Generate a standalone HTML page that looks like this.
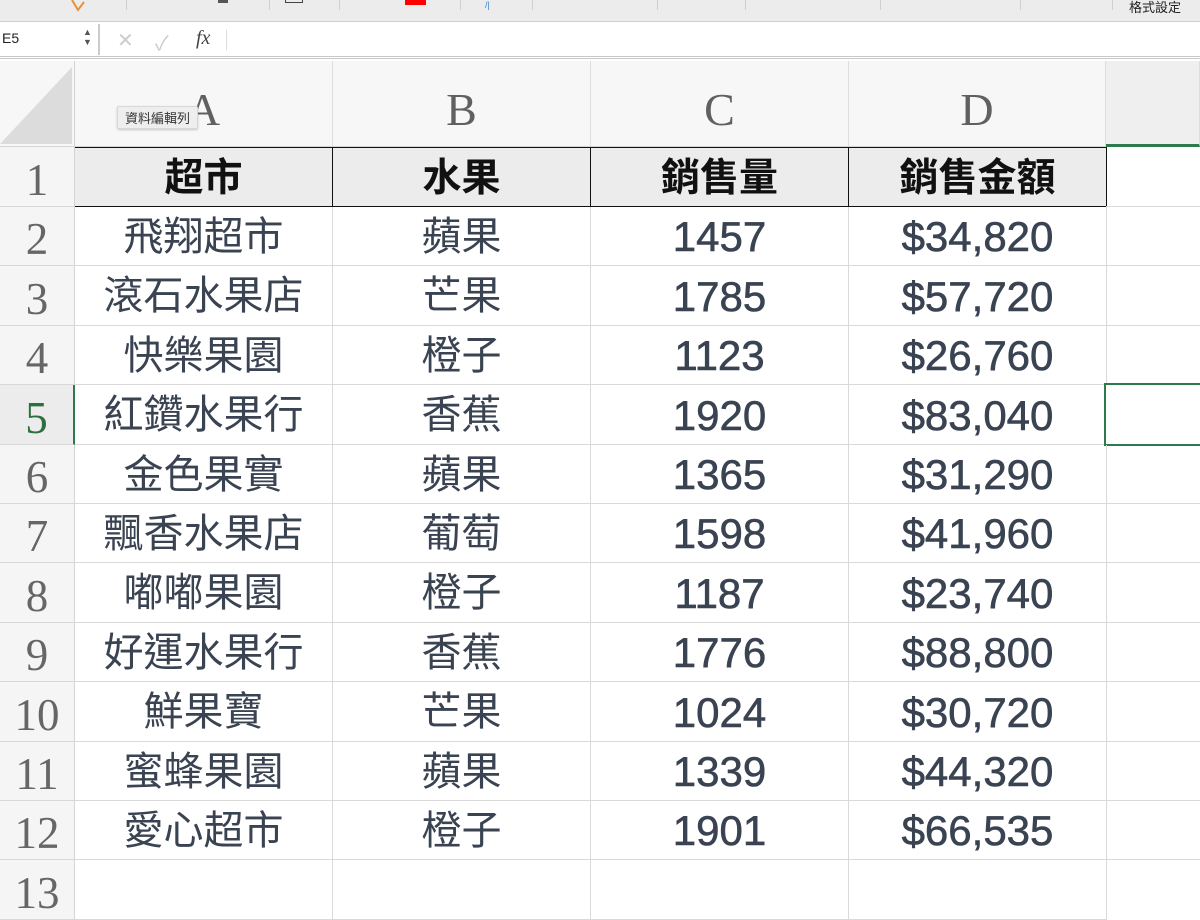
<!DOCTYPE html>
<html><head><meta charset="utf-8"><style>
*{margin:0;padding:0;box-sizing:border-box}
body{width:1200px;height:898px;overflow:hidden;background:#fff;position:relative;font-family:"Liberation Sans","Noto Sans CJK TC",sans-serif}
.a{position:absolute}
.tb{left:0;top:0;width:1200px;height:22px;background:#ececec;border-bottom:1px solid #cfcfcf}
.sep{position:absolute;top:0;width:1px;height:10px;background:#d0d0d0}
.fb{left:0;top:22px;width:1200px;height:37px;background:#fff;border-bottom:3px double #c8c8c8}
.ch{top:61px;height:86px;background:#f7f7f7;border-bottom:1px solid #d4d4d4;border-right:1px solid #dedede;font-family:"Liberation Serif",serif;font-size:46px;color:#606060;text-align:center;line-height:98px}
.rh{left:0;width:75px;background:#f5f5f5;border-bottom:1px solid #d8d8d8;border-right:1px solid #d4d4d4;font-family:"Liberation Serif",serif;font-size:45px;color:#666;text-align:center;overflow:hidden}
.c{border-bottom:1px solid #d9d9d9;border-right:1px solid #d9d9d9;text-align:center;color:#3a4352;font-size:40px;overflow:hidden;white-space:nowrap}
.c[style*="left:591px"],.c[style*="left:849px"]{font-size:42px;-webkit-text-stroke:0.6px #3a4352}
.h{background:#ececec;border:1px solid #111;border-left:none;color:#111;font-weight:bold;font-size:39px;text-align:center}
</style></head><body>
<div class="a tb">
 <svg class="a" style="left:70px;top:0" width="20" height="12"><path d="M2 0 L8 10 L14 2" fill="none" stroke="#e8913a" stroke-width="2"/></svg>
 <div class="sep" style="left:126px"></div>
 <div class="a" style="left:218px;top:0;width:10px;height:3px;background:#555"></div>
 <div class="sep" style="left:269px"></div>
 <div class="a" style="left:285px;top:0;width:18px;height:3px;border:1px solid #444;border-top:none"></div>
 <div class="sep" style="left:339px"></div>
 <div class="a" style="left:405px;top:0;width:21px;height:5px;background:#f00"></div>
 <div class="sep" style="left:460px"></div>
 <div class="a" style="left:485px;top:0;font-size:9px;color:#3a80d0">/|</div>
 <div class="sep" style="left:532px"></div>
 <div class="sep" style="left:657px"></div>
 <div class="sep" style="left:745px"></div>
 <div class="sep" style="left:880px"></div>
 <div class="sep" style="left:1020px"></div>
 <div class="sep" style="left:1112px"></div>
 <div class="a" style="left:1129px;top:-3px;font-size:13px;color:#222;font-family:'Liberation Sans','Noto Sans CJK TC',sans-serif">格式設定</div>
</div>
<div class="a fb">
 <div class="a" style="left:0;top:2px;width:100px;height:31px;border-right:2px solid #ccc;background:#fff"></div>
 <div class="a" style="left:2px;top:8px;font-size:14px;color:#222">E5</div>
 <div class="a" style="left:83px;top:5px;font-size:9px;color:#555;line-height:10px">▲<br>▼</div>
 <div class="a" style="left:117px;top:6px;font-size:20px;color:#ccc">✕</div>
 <div class="a" style="left:155px;top:5px;font-size:20px;color:#ccc">✓</div>
 <div class="a" style="left:196px;top:5px;font-size:20px;color:#444;font-family:'Liberation Serif',serif;font-style:italic">fx</div>
 <div class="a" style="left:226px;top:8px;width:1px;height:20px;background:#ddd"></div>
</div>
<div class="a" style="left:0;top:61px;width:75px;height:86px;background:#f7f7f7;border-right:1px solid #d4d4d4;border-bottom:1px solid #d4d4d4"></div>
<svg class="a" style="left:0;top:61px" width="75" height="86"><polygon points="72,6 72,83 0,83" fill="#dcdcdc"/></svg>
<div class="a ch" style="left:75px;width:258px">A</div>
<div class="a ch" style="left:333px;width:258px">B</div>
<div class="a ch" style="left:591px;width:258px">C</div>
<div class="a ch" style="left:849px;width:257px">D</div>
<div class="a ch" style="left:1106px;width:94px;background:#efefef;border-bottom:3px solid #2f7a4c"></div>
<div class="a" style="left:117px;top:106px;padding:1px 7px;background:#eee;border:1px solid #d8d8d8;border-radius:2px;font-size:13px;color:#333;box-shadow:0 1px 2px rgba(0,0,0,.2)">資料編輯列</div>

<div class="a rh" style="top:147px;height:60px;line-height:66px">1</div>
<div class="a rh" style="top:207px;height:59px;line-height:65px">2</div>
<div class="a rh" style="top:266px;height:60px;line-height:66px">3</div>
<div class="a rh" style="top:326px;height:59px;line-height:65px">4</div>
<div class="a rh" style="top:385px;height:60px;line-height:66px;color:#2c7040;background:#ececec;border-right:2px solid #2f7a4c">5</div>
<div class="a rh" style="top:445px;height:59px;line-height:65px">6</div>
<div class="a rh" style="top:504px;height:59px;line-height:65px">7</div>
<div class="a rh" style="top:563px;height:60px;line-height:66px">8</div>
<div class="a rh" style="top:623px;height:59px;line-height:65px">9</div>
<div class="a rh" style="top:682px;height:60px;line-height:66px">10</div>
<div class="a rh" style="top:742px;height:59px;line-height:65px">11</div>
<div class="a rh" style="top:801px;height:59px;line-height:65px">12</div>
<div class="a rh" style="top:860px;height:60px;line-height:66px">13</div>

<div class="a h" style="left:75px;top:147px;width:258px;height:60px;line-height:62px">超市</div>
<div class="a h" style="left:333px;top:147px;width:258px;height:60px;line-height:62px">水果</div>
<div class="a h" style="left:591px;top:147px;width:258px;height:60px;line-height:62px">銷售量</div>
<div class="a h" style="left:849px;top:147px;width:258px;height:60px;line-height:62px">銷售金額</div>
<div class="a" style="left:1106px;top:147px;width:94px;height:60px;border-bottom:1px solid #d9d9d9"></div>

<div class="a c" style="left:75px;top:207px;width:258px;height:59px;line-height:60px">飛翔超市</div>
<div class="a c" style="left:333px;top:207px;width:258px;height:59px;line-height:60px">蘋果</div>
<div class="a c" style="left:591px;top:207px;width:258px;height:59px;line-height:60px">1457</div>
<div class="a c" style="left:849px;top:207px;width:258px;height:59px;line-height:60px">$34,820</div>
<div class="a c" style="left:1107px;top:207px;width:93px;height:59px;border-right:none"></div>

<div class="a c" style="left:75px;top:266px;width:258px;height:60px;line-height:61px">滾石水果店</div>
<div class="a c" style="left:333px;top:266px;width:258px;height:60px;line-height:61px">芒果</div>
<div class="a c" style="left:591px;top:266px;width:258px;height:60px;line-height:61px">1785</div>
<div class="a c" style="left:849px;top:266px;width:258px;height:60px;line-height:61px">$57,720</div>
<div class="a c" style="left:1107px;top:266px;width:93px;height:60px;border-right:none"></div>

<div class="a c" style="left:75px;top:326px;width:258px;height:59px;line-height:60px">快樂果園</div>
<div class="a c" style="left:333px;top:326px;width:258px;height:59px;line-height:60px">橙子</div>
<div class="a c" style="left:591px;top:326px;width:258px;height:59px;line-height:60px">1123</div>
<div class="a c" style="left:849px;top:326px;width:258px;height:59px;line-height:60px">$26,760</div>
<div class="a c" style="left:1107px;top:326px;width:93px;height:59px;border-right:none"></div>

<div class="a c" style="left:75px;top:385px;width:258px;height:60px;line-height:61px">紅鑽水果行</div>
<div class="a c" style="left:333px;top:385px;width:258px;height:60px;line-height:61px">香蕉</div>
<div class="a c" style="left:591px;top:385px;width:258px;height:60px;line-height:61px">1920</div>
<div class="a c" style="left:849px;top:385px;width:258px;height:60px;line-height:61px">$83,040</div>
<div class="a" style="left:1104px;top:383px;width:100px;height:63px;border:2px solid #2f7a4c;background:#fff"></div>

<div class="a c" style="left:75px;top:445px;width:258px;height:59px;line-height:60px">金色果實</div>
<div class="a c" style="left:333px;top:445px;width:258px;height:59px;line-height:60px">蘋果</div>
<div class="a c" style="left:591px;top:445px;width:258px;height:59px;line-height:60px">1365</div>
<div class="a c" style="left:849px;top:445px;width:258px;height:59px;line-height:60px">$31,290</div>
<div class="a c" style="left:1107px;top:445px;width:93px;height:59px;border-right:none"></div>

<div class="a c" style="left:75px;top:504px;width:258px;height:59px;line-height:60px">飄香水果店</div>
<div class="a c" style="left:333px;top:504px;width:258px;height:59px;line-height:60px">葡萄</div>
<div class="a c" style="left:591px;top:504px;width:258px;height:59px;line-height:60px">1598</div>
<div class="a c" style="left:849px;top:504px;width:258px;height:59px;line-height:60px">$41,960</div>
<div class="a c" style="left:1107px;top:504px;width:93px;height:59px;border-right:none"></div>

<div class="a c" style="left:75px;top:563px;width:258px;height:60px;line-height:61px">嘟嘟果園</div>
<div class="a c" style="left:333px;top:563px;width:258px;height:60px;line-height:61px">橙子</div>
<div class="a c" style="left:591px;top:563px;width:258px;height:60px;line-height:61px">1187</div>
<div class="a c" style="left:849px;top:563px;width:258px;height:60px;line-height:61px">$23,740</div>
<div class="a c" style="left:1107px;top:563px;width:93px;height:60px;border-right:none"></div>

<div class="a c" style="left:75px;top:623px;width:258px;height:59px;line-height:60px">好運水果行</div>
<div class="a c" style="left:333px;top:623px;width:258px;height:59px;line-height:60px">香蕉</div>
<div class="a c" style="left:591px;top:623px;width:258px;height:59px;line-height:60px">1776</div>
<div class="a c" style="left:849px;top:623px;width:258px;height:59px;line-height:60px">$88,800</div>
<div class="a c" style="left:1107px;top:623px;width:93px;height:59px;border-right:none"></div>

<div class="a c" style="left:75px;top:682px;width:258px;height:60px;line-height:61px">鮮果寶</div>
<div class="a c" style="left:333px;top:682px;width:258px;height:60px;line-height:61px">芒果</div>
<div class="a c" style="left:591px;top:682px;width:258px;height:60px;line-height:61px">1024</div>
<div class="a c" style="left:849px;top:682px;width:258px;height:60px;line-height:61px">$30,720</div>
<div class="a c" style="left:1107px;top:682px;width:93px;height:60px;border-right:none"></div>

<div class="a c" style="left:75px;top:742px;width:258px;height:59px;line-height:60px">蜜蜂果園</div>
<div class="a c" style="left:333px;top:742px;width:258px;height:59px;line-height:60px">蘋果</div>
<div class="a c" style="left:591px;top:742px;width:258px;height:59px;line-height:60px">1339</div>
<div class="a c" style="left:849px;top:742px;width:258px;height:59px;line-height:60px">$44,320</div>
<div class="a c" style="left:1107px;top:742px;width:93px;height:59px;border-right:none"></div>

<div class="a c" style="left:75px;top:801px;width:258px;height:59px;line-height:60px">愛心超市</div>
<div class="a c" style="left:333px;top:801px;width:258px;height:59px;line-height:60px">橙子</div>
<div class="a c" style="left:591px;top:801px;width:258px;height:59px;line-height:60px">1901</div>
<div class="a c" style="left:849px;top:801px;width:258px;height:59px;line-height:60px">$66,535</div>
<div class="a c" style="left:1107px;top:801px;width:93px;height:59px;border-right:none"></div>

<div class="a c" style="left:75px;top:860px;width:258px;height:60px"></div>
<div class="a c" style="left:333px;top:860px;width:258px;height:60px"></div>
<div class="a c" style="left:591px;top:860px;width:258px;height:60px"></div>
<div class="a c" style="left:849px;top:860px;width:258px;height:60px"></div>
</body></html>
